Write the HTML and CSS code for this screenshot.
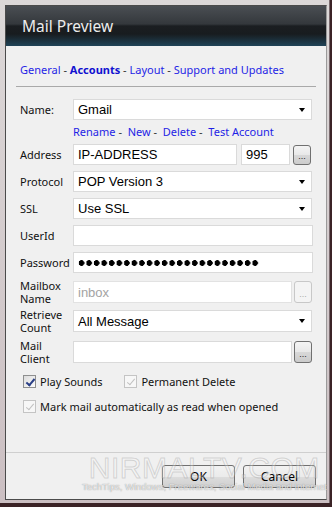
FILE: index.html
```html
<!DOCTYPE html>
<html lang="en">
<head>
  <meta charset="UTF-8" />
  <meta name="viewport" content="width=device-width, initial-scale=1.0" />
  <title>Mail Preview</title>
  <link rel="stylesheet" href="styles.css">
</head>
<body>
  <div class="window">
    <div class="dialog">
      <div class="titlebar">Mail Preview</div>

      <div class="content">
        <div class="nav">
          <a href="#">General</a> - <a href="#" class="current">Accounts</a> - <a href="#">Layout</a> - <a href="#">Support and Updates</a>
        </div>
        <hr class="nav-line" />

        <div class="form">
          <div class="row row-name">
            <label class="lbl">Name:</label>
            <div class="combo"><span>Gmail</span><i class="arrow"></i></div>
          </div>

          <div class="acct-links">
            <a href="#">Rename</a> - &nbsp;<a href="#">New</a> - &nbsp;<a href="#">Delete</a> - &nbsp;<a href="#">Test Account</a>
          </div>

          <div class="row row-address">
            <label class="lbl">Address</label>
            <div class="field host">IP-ADDRESS</div>
            <div class="field port">995</div>
            <button class="dots">...</button>
          </div>

          <div class="row">
            <label class="lbl">Protocol</label>
            <div class="combo"><span>POP Version 3</span><i class="arrow"></i></div>
          </div>

          <div class="row">
            <label class="lbl">SSL</label>
            <div class="combo"><span>Use SSL</span><i class="arrow"></i></div>
          </div>

          <div class="row">
            <label class="lbl">UserId</label>
            <div class="field wide"></div>
          </div>

          <div class="row">
            <label class="lbl">Password</label>
            <div class="field wide"><span class="mask"></span></div>
          </div>

          <div class="row tall row-mailbox">
            <label class="lbl">Mailbox<br />Name</label>
            <div class="field wide disabled">inbox</div>
            <button class="dots off">...</button>
          </div>

          <div class="row tall row-retrieve">
            <label class="lbl">Retrieve<br />Count</label>
            <div class="combo"><span>All Message</span><i class="arrow"></i></div>
          </div>

          <div class="row tall row-client">
            <label class="lbl">Mail<br />Client</label>
            <div class="field wide"></div>
            <button class="dots">...</button>
          </div>
        </div>

        <div class="checks">
          <div class="check-row">
            <label class="check"><span class="box on"></span>Play Sounds</label>
            <label class="check perm"><span class="box off"></span>Permanent Delete</label>
          </div>
          <div class="check-row">
            <label class="check"><span class="box off"></span>Mark mail automatically as read when opened</label>
          </div>
        </div>
      </div>

      <div class="footer">
        <div class="watermark">
          <div class="wm-big">NIRMALTV.COM</div>
          <div class="wm-small">TechTips, Windows, Freewares, Social Media and Internet</div>
        </div>
        <button class="btn">OK</button>
        <button class="btn">Cancel</button>
      </div>
    </div>
  </div>
</body>
</html>
```

FILE: styles.css
```css
body { margin: 0; background: #3b2326; font-family: "Noto Sans", sans-serif; }
.window { width: 322px; height: 495px; padding: 5px 2px 3px 5px; background: linear-gradient(#dcd8d8, #cbbfc2); border-right: 1px solid #7a6a6e; }
.dialog { height: 493px; border: 1px solid #4b4b4b; border-right-color: #9a9a9a; background: #f0f0f0; display: flex; flex-direction: column; }

.titlebar { height: 40px; padding-left: 16px; line-height: 40px; color: #ececec; font-size: 15.5px; background: linear-gradient(#4a4e53 0%, #34383c 45%, #1b1e21 50%, #181c1f 70%, #1f4357 100%); }

.content { flex: 1; padding: 0 13px 0 14px; }

.nav { margin-top: 16px; height: 16px; line-height: 16px; font-size: 11px; color: #333; }
.nav a { color: #1f1fe6; text-decoration: none; }
.nav a.current { font-weight: bold; color: #1010d0; }
.nav-line { margin: 8px 0 0 -4px; width: 300px; border: none; border-top: 1px solid #a9a9a9; height: 0; }

.form { margin-top: 12px; }
.row { display: flex; align-items: center; height: 21px; margin-top: 6px; }
.row-name { margin-top: 0; }
.row-address { margin-top: 3px; }
.row.tall { height: 26px; }
.row-mailbox { margin-top: 6px; }
.row-retrieve { margin-top: 3px; }
.row-client { margin-top: 5px; }

.acct-links { height: 18px; line-height: 18px; margin-top: 3px; padding-left: 53px; font-size: 11px; color: #333; }
.acct-links a { color: #1f1fe6; text-decoration: none; }

.lbl { width: 53px; flex: none; font-size: 11px; line-height: 13px; color: #111; }

.combo, .field { box-sizing: border-box; height: 21px; background: #fff; border: 1px solid #dadada; font-family: "Liberation Sans", Arial, sans-serif; font-size: 13px; color: #000; display: flex; align-items: center; padding-left: 4px; }
.tall .combo, .tall .field { height: 22px; }
.combo { width: 239px; justify-content: space-between; padding-right: 6px; }
.arrow { width: 0; height: 0; border-left: 3.5px solid transparent; border-right: 3.5px solid transparent; border-top: 4px solid #000; }
.host { width: 164px; }
.port { width: 49px; margin-left: 4px; }
.wide { flex: 1; }
.field.disabled { color: #a3a3a3; border-color: #e2e2e2; }

.mask { width: 181px; height: 8px; background: radial-gradient(circle at 3.5px 4px, #000 2.6px, transparent 3.1px) 0 0 / 7.55px 8px repeat-x; }

.dots { flex: none; width: 18px; height: 20px; margin-left: 3px; padding: 0 0 3px; border: 1px solid #707070; border-radius: 3px; background: linear-gradient(#f4f4f4 0%, #e8e8e8 50%, #d8d8d8 51%, #cbcbcb 100%); font-size: 9px; line-height: 1; color: #222; display: flex; align-items: flex-end; justify-content: center; }
.row-mailbox .dots, .row-client .dots { margin-left: 2px; height: 22px; margin-right: 1px; }
.dots.off { border-color: #c8c8c8; background: #f4f4f4; color: #aaa; }

.checks { margin-top: 8px; padding-left: 3px; }
.check-row { display: flex; align-items: center; height: 17px; margin-bottom: 8px; }
.check { display: flex; align-items: center; font-size: 11px; color: #111; }
.check.perm { margin-left: 22px; }
.box { box-sizing: border-box; width: 13px; height: 13px; margin-right: 4px; border: 1px solid #8e8f8f; background: linear-gradient(135deg, #dcdcdc, #fcfcfc); position: relative; }
.box::after { content: ""; position: absolute; left: 3.5px; top: 0.5px; width: 3px; height: 7px; border: solid #2a3f86; border-width: 0 2px 2px 0; transform: rotate(40deg); }
.box.off { border-color: #c4c4c4; background: #f7f7f7; }
.box.off::after { border-color: #c0c0c0; border-width: 0 1.5px 1.5px 0; }

.footer { position: relative; height: 47px; border-top: 1px solid #cfcfcf; display: flex; justify-content: flex-end; align-items: flex-start; gap: 8px; padding: 12px 10px 0 0; box-sizing: border-box; }
.btn { width: 73px; height: 23px; border: 1px solid #707070; border-radius: 3px; background: linear-gradient(#f2f2f2 0%, #ebebeb 50%, #dddddd 51%, #cfcfcf 100%); font-family: "Noto Sans", sans-serif; font-size: 12px; color: #000; padding: 0; }

.watermark { position: absolute; left: 76px; top: 1px; z-index: 1; pointer-events: none; text-align: center; }
.wm-big { font-family: "Liberation Sans", Arial, sans-serif; font-size: 30px; letter-spacing: 0.5px; color: rgba(255, 255, 255, 0.25); -webkit-text-stroke: 1px rgba(150, 150, 150, 0.35); line-height: 28px; }
.wm-small { font-family: "Liberation Sans", Arial, sans-serif; font-size: 9.5px; color: rgba(255, 255, 255, 0.75); text-shadow: 0 0 1px rgba(110, 110, 110, 0.9); margin-top: -1px; white-space: nowrap; }
```
